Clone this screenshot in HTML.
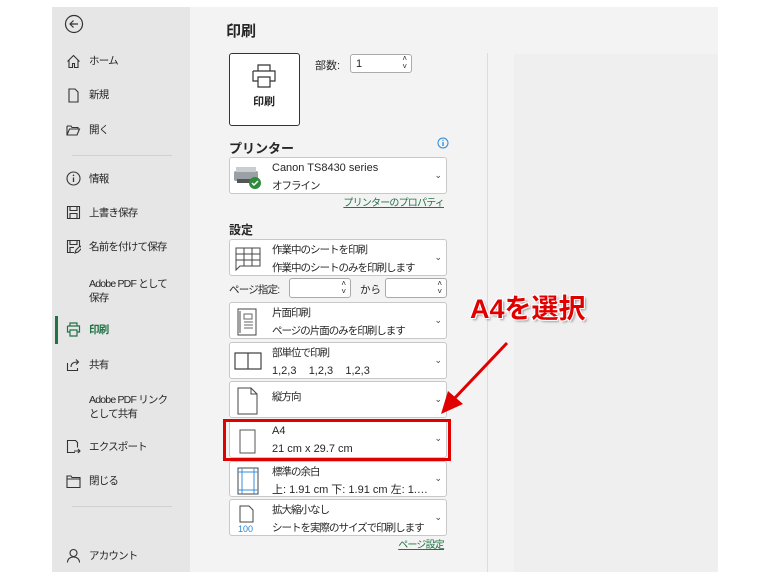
<!DOCTYPE html>
<html><head><meta charset="utf-8"><style>
*{margin:0;padding:0;box-sizing:border-box}
body{width:778px;height:579px;background:#fff;position:relative;overflow:hidden;font-family:"Liberation Sans","Noto Sans CJK JP",sans-serif;color:#262626}
.abs{position:absolute}
#side{left:52px;top:7px;width:138px;height:565px;background:#e6e6e6}
#main{left:190px;top:7px;width:528px;height:565px;background:#f3f3f3}
.si{position:absolute;left:89px;font-size:10.5px;letter-spacing:-0.8px;line-height:13px;color:#262626;white-space:nowrap}
.ic{position:absolute;left:66px}
.dd{position:absolute;left:229px;width:218px;background:#fff;border:1px solid #c8c8c8;border-radius:3px}
.dd .t1{position:absolute;left:42px;top:4px;font-size:10.5px;line-height:13px;white-space:nowrap;letter-spacing:-1px}
.dd .t2{position:absolute;left:42px;top:22px;font-size:10.5px;line-height:13px;white-space:nowrap;letter-spacing:-1px}
.dd .l{font-size:11px;letter-spacing:0}
.dd .ch{position:absolute;right:4px;top:50%;margin-top:-6px;font-size:9px;line-height:10px;color:#444}
.dd svg{position:absolute;left:4px;top:4px}
.lnk{position:absolute;font-size:10px;letter-spacing:-0.8px;line-height:12px;color:#217346;text-decoration:underline;white-space:nowrap}
</style></head><body>
<div id="side" class="abs"></div>
<div id="main" class="abs"></div>
<div class="abs" style="left:487px;top:53px;width:1px;height:519px;background:#dcdcdc"></div>
<div class="abs" style="left:514px;top:54px;width:204px;height:518px;background:#efefef"></div>

<svg class="abs" style="left:64px;top:14px" width="20" height="20" viewBox="0 0 20 20"><circle cx="10" cy="10" r="8.5" fill="none" stroke="#333" stroke-width="1.2"/><path d="M14 10H6M9.5 6.5L6 10l3.5 3.5" fill="none" stroke="#333" stroke-width="1.2"/></svg>
<svg class="ic" style="top:54px" width="15" height="15" viewBox="0 0 15 15"><path d="M1.5 7.5L7.5 1.5l6 6M3 6v7.5h3.5v-4h2v4H12V6" fill="none" stroke="#333" stroke-width="1.1"/></svg>
<div class="si" style="top:55px">ホーム</div>
<svg class="ic" style="top:88px" width="15" height="15" viewBox="0 0 15 15"><path d="M3 1h6l3 3v10H3z" fill="none" stroke="#333" stroke-width="1.1"/></svg>
<div class="si" style="top:89px">新規</div>
<svg class="ic" style="top:123px" width="15" height="15" viewBox="0 0 15 15"><path d="M1 3h4l1 1.5h6V6M1 3v9h10l2.5-6H3.5L1 12" fill="none" stroke="#333" stroke-width="1.1"/></svg>
<div class="si" style="top:124px">開く</div>
<div class="abs" style="left:72px;top:155px;width:100px;height:1px;background:#d0d0d0"></div>
<svg class="ic" style="top:171px" width="15" height="15" viewBox="0 0 15 15"><circle cx="7.5" cy="7.5" r="6.5" fill="none" stroke="#333" stroke-width="1.1"/><path d="M7.5 6.5v4.5" stroke="#333" stroke-width="1.3"/><circle cx="7.5" cy="4.3" r=".8" fill="#333"/></svg>
<div class="si" style="top:173px">情報</div>
<svg class="ic" style="top:205px" width="15" height="15" viewBox="0 0 15 15"><path d="M1.5 1.5h12v12h-12zM4 1.5v4h7v-4M4 13.5v-5h7v5" fill="none" stroke="#333" stroke-width="1.1"/></svg>
<div class="si" style="top:207px">上書き保存</div>
<svg class="ic" style="top:239px" width="15" height="15" viewBox="0 0 15 15"><path d="M8 13.5H1.5v-12h12V7M4 1.5v4h7v-4M4 13.5v-5h4M9 14l1-3 4-4 2 2-4 4z" fill="none" stroke="#333" stroke-width="1.1"/></svg>
<div class="si" style="top:241px">名前を付けて保存</div>
<div class="si" style="top:277px;line-height:14px">Adobe PDF として<br>保存</div>
<div class="abs" style="left:55px;top:316px;width:3px;height:28px;background:#217346"></div>
<svg class="ic" style="top:322px" width="15" height="15" viewBox="0 0 15 15"><path d="M4 4V1h7v3M1.5 4h12v6H11M4 10H1.5V4M4 8h7v6H4z" fill="none" stroke="#217346" stroke-width="1.2"/></svg>
<div class="si" style="top:324px;color:#217346;font-weight:bold">印刷</div>
<svg class="ic" style="top:357px" width="15" height="15" viewBox="0 0 15 15"><path d="M1.5 6v7.5h10V11M5 10c0-4 3-5 7-5M10 2.5L12.5 5 10 7.5" fill="none" stroke="#333" stroke-width="1.1"/></svg>
<div class="si" style="top:359px">共有</div>
<div class="si" style="top:393px;line-height:14px">Adobe PDF リンク<br>として共有</div>
<svg class="ic" style="top:439px" width="15" height="15" viewBox="0 0 15 15"><path d="M9 13.5H1.5v-12h8l2 2v5M8 12h6M12 10l2 2-2 2" fill="none" stroke="#333" stroke-width="1.1"/></svg>
<div class="si" style="top:441px">エクスポート</div>
<svg class="ic" style="top:474px" width="15" height="15" viewBox="0 0 15 15"><path d="M1 2h4l1 1.5h8v10H1zM1 5h13" fill="none" stroke="#333" stroke-width="1.1"/></svg>
<div class="si" style="top:475px">閉じる</div>
<div class="abs" style="left:72px;top:506px;width:100px;height:1px;background:#d0d0d0"></div>
<svg class="ic" style="top:548px" width="15" height="15" viewBox="0 0 15 15"><circle cx="7.5" cy="5" r="3.5" fill="none" stroke="#333" stroke-width="1.1"/><path d="M1.5 14.5c0-3.5 2.5-5.5 6-5.5s6 2 6 5.5" fill="none" stroke="#333" stroke-width="1.1"/></svg>
<div class="si" style="top:550px">アカウント</div>

<div class="abs" style="left:226px;top:20px;font-size:15px;font-weight:bold">印刷</div>
<div class="abs" style="left:229px;top:53px;width:71px;height:73px;background:#fff;border:1.5px solid #333;border-radius:3px"></div>
<svg class="abs" style="left:251px;top:64px" width="26" height="24" viewBox="0 0 26 24"><path d="M7 7V1h12v6M2 7h22v10h-5M7 17H2V7M7 13h12v10H7z" fill="none" stroke="#333" stroke-width="1.2"/></svg>
<div class="abs" style="left:253px;top:93px;font-size:11px;font-weight:bold">印刷</div>
<div class="abs" style="left:315px;top:57px;font-size:11px">部数:</div>
<div class="abs" style="left:350px;top:54px;width:62px;height:19px;background:#fff;border:1px solid #aaa;border-radius:3px;font-size:11px;padding:3px 0 0 5px">1<span style="position:absolute;right:4px;top:0;font-size:8px;line-height:8px">˄<br>˅</span></div>

<div class="abs" style="left:229px;top:138px;font-size:13px;font-weight:bold">プリンター</div>
<svg class="abs" style="left:437px;top:137px" width="12" height="12" viewBox="0 0 12 12"><circle cx="6" cy="6" r="5" fill="none" stroke="#2b88d8" stroke-width="1"/><path d="M6 5v4" stroke="#2b88d8" stroke-width="1.3"/><circle cx="6" cy="3.3" r=".7" fill="#2b88d8"/></svg>
<div class="dd" style="top:157px;height:37px">
<svg width="30" height="28" viewBox="0 0 30 28" style="top:6px;left:3px"><rect x="1" y="7" width="24" height="10" rx="2" fill="#9aa0a3"/><rect x="3" y="3" width="20" height="5" fill="#c9cdd0"/><rect x="4" y="15" width="17" height="4" fill="#555"/><circle cx="22" cy="19" r="6" fill="#2e8b3c"/><path d="M19 19l2 2 4-4" fill="none" stroke="#fff" stroke-width="1.5"/></svg>
<div class="t1 l">Canon TS8430 series</div><div class="t2">オフライン</div><div class="ch">⌄</div></div>
<div class="lnk" style="right:334px;top:198px">プリンターのプロパティ</div>

<div class="abs" style="left:229px;top:221px;font-size:12px;font-weight:bold">設定</div>
<div class="dd" style="top:239px;height:37px">
<svg width="28" height="28" viewBox="0 0 28 28"><path d="M2 4h24v18H6l-4 4zM2 10h24M2 16h24M10 4v18M18 4v18" fill="none" stroke="#444" stroke-width="1"/></svg>
<div class="t1">作業中のシートを印刷</div><div class="t2">作業中のシートのみを印刷します</div><div class="ch">⌄</div></div>
<div class="abs" style="left:229px;top:282px;font-size:10.5px;letter-spacing:-0.8px">ページ指定:</div>
<div class="abs" style="left:289px;top:278px;width:62px;height:20px;background:#fff;border:1px solid #aaa;border-radius:3px"><span style="position:absolute;right:4px;top:1px;font-size:8px;line-height:8px">˄<br>˅</span></div>
<div class="abs" style="left:360px;top:282px;font-size:10.5px">から</div>
<div class="abs" style="left:385px;top:278px;width:62px;height:20px;background:#fff;border:1px solid #aaa;border-radius:3px"><span style="position:absolute;right:4px;top:1px;font-size:8px;line-height:8px">˄<br>˅</span></div>
<div class="dd" style="top:302px;height:37px">
<svg width="28" height="30" viewBox="0 0 28 30"><path d="M4 2h18v26H4z" fill="none" stroke="#444"/><path d="M6 4v22" stroke="#444"/><path d="M10 7h8v5h-8zM10 15h9M10 18h9M10 21h9" fill="none" stroke="#666"/></svg>
<div class="t1">片面印刷</div><div class="t2">ページの片面のみを印刷します</div><div class="ch">⌄</div></div>
<div class="dd" style="top:342px;height:37px">
<svg width="30" height="28" viewBox="0 0 30 28"><path d="M1 6h26v16H1zM14 6v16" fill="none" stroke="#444" stroke-width="1.2"/></svg>
<div class="t1">部単位で印刷</div><div class="t2 l">1,2,3&nbsp;&nbsp;&nbsp;&nbsp;1,2,3&nbsp;&nbsp;&nbsp;&nbsp;1,2,3</div><div class="ch">⌄</div></div>
<div class="dd" style="top:381px;height:37px">
<svg width="28" height="30" viewBox="0 0 28 30"><path d="M4 2h13l6 6v20H4zM17 2v6h6" fill="none" stroke="#444"/></svg>
<div class="t1" style="top:9px">縦方向</div><div class="ch">⌄</div></div>
<div class="dd" style="top:420px;height:38px">
<svg width="28" height="30" viewBox="0 0 28 30"><path d="M6 5h15v23H6z" fill="none" stroke="#555"/></svg>
<div class="t1 l">A4</div><div class="t2 l">21 cm x 29.7 cm</div><div class="ch">⌄</div></div>
<div class="abs" style="left:223px;top:419px;width:228px;height:42px;border:3px solid #e00000"></div>
<div class="dd" style="top:461px;height:36px">
<svg width="28" height="30" viewBox="0 0 28 30"><path d="M4 2h20v26H4z" fill="none" stroke="#444"/><path d="M8 2v26M20 2v26M4 6h20M4 24h20" stroke="#3a8fd8"/></svg>
<div class="t1">標準の余白</div><div class="t2 l">上: 1.91 cm 下: 1.91 cm 左: 1.…</div><div class="ch">⌄</div></div>
<div class="dd" style="top:499px;height:37px">
<svg width="28" height="30" viewBox="0 0 28 30"><path d="M6 2h9l4 4v12H6z" fill="none" stroke="#444"/><text x="4" y="28" font-size="9" fill="#2b88d8" font-family="Liberation Sans">100</text></svg>
<div class="t1">拡大縮小なし</div><div class="t2">シートを実際のサイズで印刷します</div><div class="ch">⌄</div></div>
<div class="lnk" style="right:334px;top:540px">ページ設定</div>

<div class="abs" style="left:470px;top:287px;font-size:27px;font-weight:bold;color:#e00000;white-space:nowrap;text-shadow:1px 1px 0 #fff,-1px -1px 0 #fff,1px -1px 0 #fff,-1px 1px 0 #fff,2px 2px 2px #999">A4を選択</div>
<svg class="abs" style="left:436px;top:338px" width="80" height="82" viewBox="0 0 80 82"><path d="M71 5L16 63" stroke="#e00000" stroke-width="3"/><path d="M5 76L12 53 27 66z" fill="#e00000"/></svg>
</body></html>
